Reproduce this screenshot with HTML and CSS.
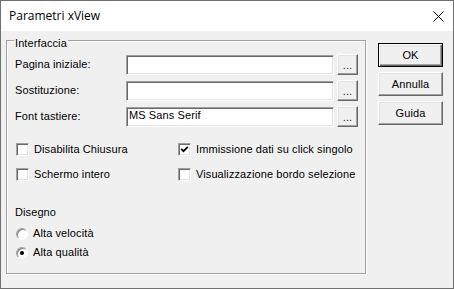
FILE: index.html
```html
<!DOCTYPE html>
<html lang="it">
<head>
<meta charset="utf-8">
<title>Parametri xView</title>
<link rel="stylesheet" href="styles.css">
</head>
<body>
<div class="window">
  <div class="titlebar">
    <span class="title">Parametri xView</span>
    <svg class="close" width="11" height="11" viewBox="0 0 11 11"><path d="M0.5 0.5 L10.5 10.5 M10.5 0.5 L0.5 10.5" stroke="#000" stroke-width="1" fill="none"/></svg>
  </div>
  <div class="client">
    <fieldset class="group">
      <legend>Interfaccia</legend>
      <div class="fields">
        <div class="row"><span class="lbl">Pagina iniziale:</span><div class="edit"></div><div class="btn3d browse">...</div></div>
        <div class="row"><span class="lbl">Sostituzione:</span><div class="edit"></div><div class="btn3d browse">...</div></div>
        <div class="row"><span class="lbl">Font tastiere:</span><div class="edit">MS Sans Serif</div><div class="btn3d browse">...</div></div>
      </div>
      <div class="checks">
        <div class="check"><span class="box"></span>Disabilita Chiusura</div>
        <div class="check"><span class="box"><svg width="9" height="9" viewBox="0 0 9 9"><path d="M1.2 3.8 L3.5 6.2 L7.8 1.8" stroke="#000" stroke-width="1.7" fill="none"/></svg></span>Immissione dati su click singolo</div>
        <div class="check"><span class="box"></span>Schermo intero</div>
        <div class="check"><span class="box"></span>Visualizzazione bordo selezione</div>
      </div>
      <div class="drawing">
        <div class="caption">Disegno</div>
        <div class="radios">
          <div class="radio"><span class="circle"></span>Alta velocità</div>
          <div class="radio"><span class="circle on"><span class="dot"></span></span>Alta qualità</div>
        </div>
      </div>
    </fieldset>
    <div class="buttons">
      <div class="btn3d push default">OK</div>
      <div class="btn3d push">Annulla</div>
      <div class="btn3d push">Guida</div>
    </div>
  </div>
</div>
</body>
</html>
```
FILE: styles.css
```css
* { box-sizing: border-box; }
html, body { margin: 0; padding: 0; background: #f0f0f0; }
body {
  font-family: "Liberation Sans", Arial, sans-serif;
  font-size: 11px;
  line-height: 13px;
  letter-spacing: 0.1px;
  color: #000;
}
.window {
  width: 454px;
  height: 289px;
  border: 1px solid #707070;
  display: flex;
  flex-direction: column;
  background: #f0f0f0;
}
.titlebar {
  height: 30px;
  flex: none;
  background: #fff;
  display: flex;
  align-items: center;
  justify-content: space-between;
  padding: 0 9px 0 8px;
}
.title {
  font-family: "Open Sans", "Noto Sans", sans-serif;
  font-size: 12px;
  line-height: 16px;
  letter-spacing: 0;
}
.close { display: block; }
.client {
  flex: 1;
  display: flex;
  align-items: flex-start;
  padding-left: 5px;
}
.group {
  margin: 0;
  padding: 0;
  width: 360px;
  height: 243px;
  min-width: 0;
  border: 1px solid #a0a0a0;
  box-shadow: inset 1px 1px #fff, 1px 1px #fff;
}
.group legend {
  margin-left: 7px;
  padding: 6px 1px 0;
  font-size: 11px;
  line-height: 13px;
}
.fields {
  display: flex;
  flex-direction: column;
  gap: 5px;
  padding: 4px 0 0 8px;
}
.row {
  display: flex;
  align-items: flex-end;
  height: 21px;
}
.lbl {
  width: 111px;
  align-self: center;
}
.edit {
  width: 208px;
  height: 20px;
  margin-right: 3px;
  background: #fff;
  border: 1px solid;
  border-color: #a0a0a0 #fff #fff #a0a0a0;
  box-shadow: inset 1px 1px #696969, inset -1px -1px #e3e3e3;
  padding: 1px 0 0 2px;
  line-height: 13px;
  white-space: nowrap;
}
.btn3d {
  background: #f0f0f0;
  border: 1px solid;
  border-color: #fff #696969 #696969 #fff;
  box-shadow: inset -1px -1px #a0a0a0, inset 1px 1px #e3e3e3;
  display: flex;
  align-items: center;
  justify-content: center;
}
.browse {
  width: 21px;
  height: 21px;
  padding-top: 1px;
  color: #3c0a3c;
}
.checks {
  display: grid;
  grid-template-columns: 162px auto;
  row-gap: 12px;
  margin-top: 16px;
  padding-left: 9px;
}
.check {
  display: flex;
  align-items: center;
  gap: 5px;
  height: 13px;
  white-space: nowrap;
}
.box {
  width: 13px;
  height: 13px;
  flex: none;
  background: #fff;
  border: 1px solid;
  border-color: #a0a0a0 #fff #fff #a0a0a0;
  box-shadow: inset 1px 1px #696969, inset -1px -1px #e3e3e3;
  display: flex;
  align-items: center;
  justify-content: center;
}
.box svg { display: block; }
.drawing {
  margin-top: 25px;
  padding-left: 8px;
}
.caption { height: 13px; }
.radios {
  display: flex;
  flex-direction: column;
  gap: 6px;
  margin-top: 8px;
  padding-left: 1px;
}
.radio {
  display: flex;
  align-items: center;
  gap: 5px;
  height: 13px;
}
.circle {
  width: 12px;
  height: 12px;
  flex: none;
  border-radius: 50%;
  background: #fff;
  border: 1px solid;
  border-color: #a0a0a0 #fff #fff #a0a0a0;
  box-shadow: inset 1px 1px #808080;
  display: flex;
  align-items: center;
  justify-content: center;
}
.dot {
  width: 4px;
  height: 4px;
  border-radius: 50%;
  background: #000;
}
.buttons {
  display: flex;
  flex-direction: column;
  gap: 5px;
  margin: 12px 0 0 12px;
}
.push {
  width: 65px;
  height: 24px;
}
.push.default {
  border: 1px solid #000;
  box-shadow: inset 1px 1px #fff, inset -1px -1px #696969, inset -2px -2px #a0a0a0, inset 2px 2px #e3e3e3;
}
```
